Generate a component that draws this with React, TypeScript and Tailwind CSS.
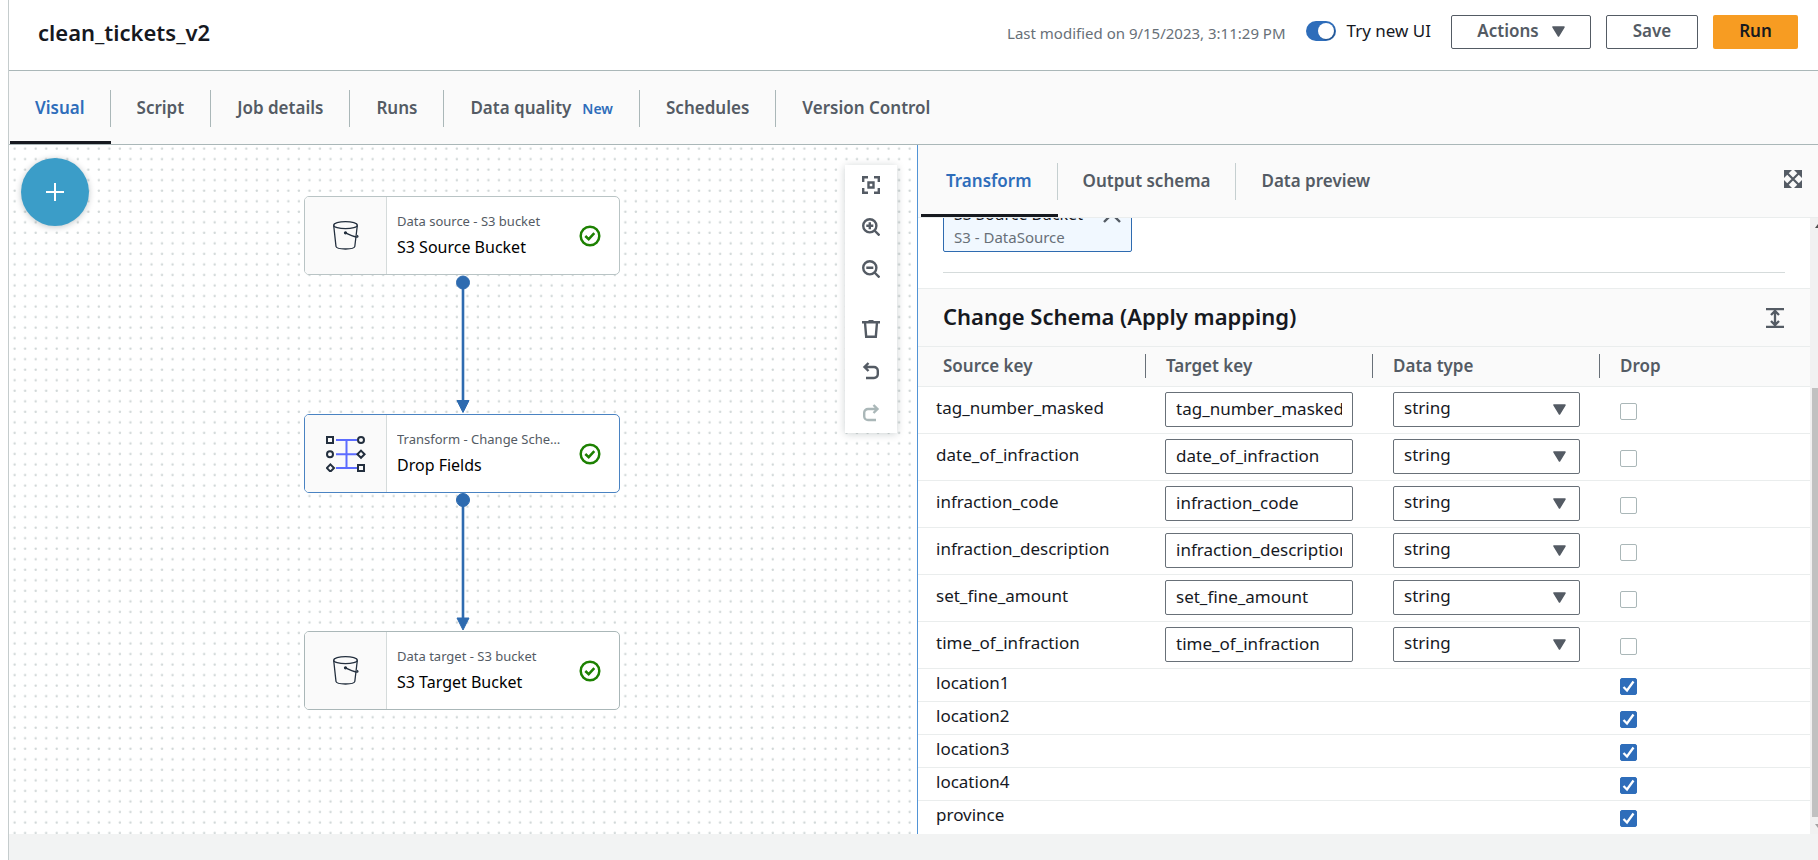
import React from "react";

const mappedFields = [
  "tag_number_masked",
  "date_of_infraction",
  "infraction_code",
  "infraction_description",
  "set_fine_amount",
  "time_of_infraction",
];
const droppedFields = ["location1", "location2", "location3", "location4", "province"];

const mainTabs = ["Visual", "Script", "Job details", "Runs", "Data quality", "Schedules", "Version Control"];
const panelTabs = ["Transform", "Output schema", "Data preview"];

function Caret() {
  return (
    <svg width="13" height="11" viewBox="0 0 13 11" aria-hidden="true">
      <path d="M1 1h11L6.500 10z" fill="#545b64" stroke="#545b64" strokeWidth="1.500" strokeLinejoin="round" />
    </svg>
  );
}

function BucketIcon() {
  return (
    <svg width="26" height="29" viewBox="0 0 26 29" fill="none" stroke="#232f3e" strokeWidth="1.300" aria-hidden="true">
      <ellipse cx="12.500" cy="4.200" rx="11.800" ry="3.500" />
      <path d="M.7 4.500 3 25.500c.3 1.700 4.500 2.500 9.500 2.500s9-.8 9.300-2.500L24.300 4.500" />
      <path d="M12.500 11.800c3.500 1.800 8 3.700 11.300 4.300 1.300.2 1.600-.8.300-1.900" />
      <circle cx="12.500" cy="11.800" r="1" fill="#232f3e" />
    </svg>
  );
}

function MappingIcon() {
  return (
    <svg width="40" height="36" viewBox="0 0 40 36" fill="none" strokeWidth="2" aria-hidden="true">
      <path d="M10 4h21M10 18.200h21M10 32h21M20.500 4v28" stroke="#5c6cff" />
      <g stroke="#232f3e">
        <rect x="1" y="1" width="6" height="6" />
        <circle cx="35" cy="4" r="3" />
        <circle cx="4" cy="18.200" r="3" />
        <path d="M35 14.600l3.600 3.600-3.600 3.600-3.600-3.600zM4.400 28.400 8 32l-3.600 3.600L.8 32z" />
        <rect x="32" y="29" width="6" height="6" />
      </g>
    </svg>
  );
}

function CheckCircle() {
  return (
    <svg className="shrink-0" width="22" height="22" viewBox="0 0 22 22" fill="none" stroke="#1d8102" strokeWidth="2.500" aria-hidden="true">
      <circle cx="11" cy="11" r="9.300" />
      <path d="M6.300 11l3.400 3.200 5.600-6" />
    </svg>
  );
}

type NodeProps = { kind: string; name: string; place: string; border: string; icon: React.ReactNode };

function FlowNode({ kind, name, place, border, icon }: NodeProps) {
  return (
    <div className={`absolute left-[295px] flex h-[79px] w-[316px] overflow-hidden rounded-[5px] border bg-white ${place} ${border}`}>
      <div className="flex w-[82px] shrink-0 items-center justify-center border-r border-[#d5dbdb] bg-[#fafafa]">{icon}</div>
      <div className="flex min-w-0 flex-1 items-center gap-[9px]">
        <div className="w-[183px] pb-px pl-[10px]">
          <p className="truncate text-[13px] leading-6 text-[#545b64]">{kind}</p>
          <p className="truncate text-[16px] leading-7 text-black">{name}</p>
        </div>
        <CheckCircle />
      </div>
    </div>
  );
}

function ToolButton({ label, children, muted }: { label: string; children: React.ReactNode; muted?: boolean }) {
  return (
    <button type="button" aria-label={label} className={`flex h-10 w-full items-center justify-center ${muted ? "text-[#aab7b8]" : "text-[#545b64]"}`}>
      <svg width="18" height="18" viewBox="0 0 18 18" fill="none" stroke="currentColor" strokeWidth="2.400" aria-hidden="true">
        {children}
      </svg>
    </button>
  );
}

function Flow() {
  return (
    <section aria-label="Job graph" className="relative min-w-0 flex-1 overflow-hidden bg-white">
      <svg className="absolute inset-0 h-full w-full" aria-hidden="true">
        <defs>
          <pattern id="dots" width="10.530" height="10.530" patternUnits="userSpaceOnUse">
            <circle cx="5.600" cy="3.700" r="1.200" fill="#d0d7d7" />
          </pattern>
        </defs>
        <rect width="100%" height="100%" fill="url(#dots)" />
        <g fill="#2e6bb0" stroke="#2e6bb0">
          <path d="M454 137v120M454 355v120" strokeWidth="2.600" />
          <circle cx="454" cy="137.500" r="6.500" />
          <circle cx="454" cy="355" r="6.500" />
          <path d="M448 255.500h12l-6 12zM448 473h12l-6 12z" />
        </g>
      </svg>
      <FlowNode kind="Data source - S3 bucket" name="S3 Source Bucket" place="top-[51px]" border="border-[#b9c4c5]" icon={<BucketIcon />} />
      <FlowNode kind="Transform - Change Schema (Apply mapping)" name="Drop Fields" place="top-[269px]" border="border-[#4a83c2]" icon={<MappingIcon />} />
      <FlowNode kind="Data target - S3 bucket" name="S3 Target Bucket" place="top-[486px]" border="border-[#aab7b8]" icon={<BucketIcon />} />
      <button type="button" aria-label="Add node" className="absolute left-3 top-[13px] flex h-[68px] w-[68px] items-center justify-center rounded-full bg-[#3b9dc8] shadow-[0_1px_6px_rgba(0,28,36,0.25)]">
        <svg width="18" height="18" viewBox="0 0 18 18" stroke="#fff" strokeWidth="2" aria-hidden="true">
          <path d="M9 0v18M0 9h18" />
        </svg>
      </button>
      <div className="absolute right-5 top-5 flex w-[52px] flex-col gap-0.5 bg-white shadow-[0_1px_8px_rgba(0,28,36,0.2)]">
        <ToolButton label="Fit to view">
          <path d="M1.200 6V1.200H6M12 1.200h4.800V6M16.800 12v4.800H12M6 16.800H1.200V12M6.500 6.500h5v5h-5z" />
        </ToolButton>
        <ToolButton label="Zoom in">
          <circle cx="7.800" cy="7.800" r="6.600" />
          <path d="M12.500 12.500l5 5M7.800 4.300v7M4.300 7.800h7" />
        </ToolButton>
        <ToolButton label="Zoom out">
          <circle cx="7.800" cy="7.800" r="6.600" />
          <path d="M12.500 12.500l5 5M4.300 7.800h7" />
        </ToolButton>
        <div className="h-4" />
        <ToolButton label="Delete">
          <path d="M0 2.200h18M6.500 1h5M3 2.500l1.200 14.300h9.600L15 2.500" />
        </ToolButton>
        <ToolButton label="Undo">
          <path d="M6.500 1 2.500 5l4 4M2.500 5H12a3.800 3.800 0 0 1 3.800 3.800v3.400A3.800 3.800 0 0 1 12 16H4" />
        </ToolButton>
        <ToolButton label="Redo" muted>
          <path d="M11.500 1l4 4-4 4M15.500 5H6a3.800 3.800 0 0 0-3.800 3.800v3.400A3.800 3.800 0 0 0 6 16h8" />
        </ToolButton>
      </div>
    </section>
  );
}

function DropBox({ name, checked }: { name: string; checked: boolean }) {
  return (
    <span className="mt-1 grid w-[17px] place-items-center">
      <input
        type="checkbox"
        aria-label={`Drop ${name}`}
        defaultChecked={checked}
        className="peer col-start-1 row-start-1 h-[17px] w-[17px] appearance-none rounded-[2px] border border-[#aab7b8] bg-white checked:border-[#2e6dba] checked:bg-[#2e6dba]"
      />
      <svg width="13" height="13" viewBox="0 0 13 13" fill="none" stroke="#fff" strokeWidth="2.300" aria-hidden="true" className="pointer-events-none invisible col-start-1 row-start-1 peer-checked:visible">
        <path d="M1.500 7 5 10.500 11.500 1.500" />
      </svg>
    </span>
  );
}

function SchemaTable() {
  return (
    <table className="w-full table-fixed border-collapse text-left text-[17px] leading-6 text-[#16191f]">
      <thead className="bg-[#fafafa] text-[#545b64]">
        <tr className="h-[39px] border-b border-[#eaeded]">
          <th className="w-[228px] p-0 font-semibold">
            <div className="border-r border-[#687078] pl-[25px]">Source key</div>
          </th>
          <th className="w-[227px] p-0 font-semibold">
            <div className="border-r border-[#687078] pl-5">Target key</div>
          </th>
          <th className="w-[227px] p-0 font-semibold">
            <div className="border-r border-[#687078] pl-5">Data type</div>
          </th>
          <th className="p-0 pl-5 font-semibold">Drop</th>
        </tr>
      </thead>
      <tbody>
        {mappedFields.map((f) => (
          <tr key={f} className="h-[47px] border-b border-[#eaeded]">
            <td className="p-0 pb-[3px] pl-[18px]">{f}</td>
            <td className="p-0 pl-[19px] pr-5">
              <input type="text" aria-label={`Target key for ${f}`} defaultValue={f} className="block h-[35px] w-full rounded-[2px] border border-[#687078] bg-white px-[10px] pb-0.5" />
            </td>
            <td className="p-0 px-5">
              <div className="relative">
                <select aria-label={`Data type for ${f}`} className="block h-[35px] w-full appearance-none rounded-[2px] border border-[#687078] bg-white px-[10px] pb-[3px]">
                  <option>string</option>
                </select>
                <span className="pointer-events-none absolute inset-y-0 right-[14px] flex items-center">
                  <Caret />
                </span>
              </div>
            </td>
            <td className="p-0 pl-5">
              <DropBox name={f} checked={false} />
            </td>
          </tr>
        ))}
        {droppedFields.map((f) => (
          <tr key={f} className="h-[33px] border-b border-[#eaeded] last:border-0">
            <td className="p-0 pb-[3px] pl-[18px]">{f}</td>
            <td className="p-0" />
            <td className="p-0" />
            <td className="p-0 pl-5">
              <DropBox name={f} checked />
            </td>
          </tr>
        ))}
      </tbody>
    </table>
  );
}

function Panel() {
  return (
    <section aria-label="Node properties" className="flex w-[901px] shrink-0 flex-col border-l border-[#5294d6] bg-white">
      <div className="flex h-[73px] items-stretch border-b border-[#eaeded] bg-[#fafafa] pl-[3px] pr-4">
        {panelTabs.map((t, i) => (
          <button
            key={t}
            type="button"
            className={`flex items-center border-b-[3px] pt-[3px] text-[17px] font-semibold ${i === 0 ? "border-[#16191f] text-[#2e6dba]" : "border-transparent text-[#545b64]"}`}
          >
            <span className={`flex h-[37px] items-center px-[25px] ${i < 2 ? "border-r border-[#c5cfd0]" : ""}`}>{t}</span>
          </button>
        ))}
        <button type="button" aria-label="Expand panel" className="mb-1 ml-auto text-[#545b64]">
          <svg width="18" height="18" viewBox="0 0 18 18" fill="currentColor" stroke="currentColor" aria-hidden="true">
            <path d="M3 3l12 12M15 3 3 15" strokeWidth="2.200" />
            <path stroke="none" d="M0 0h8L0 8zM18 0v8l-8-8zM18 18h-8l8-8zM0 18v-8l8 8z" />
          </svg>
        </button>
      </div>
      <div className="flex flex-1">
        <div className="min-w-0 flex-1">
          <div className="px-[25px]">
            <div className="flex h-[34px] flex-col justify-end overflow-hidden">
              <div className="w-[189px] shrink-0 rounded-[2px] border border-[#2e6bb0] bg-[#f1f8ff] px-[10px] pb-[3px]">
                <div className="flex items-center justify-between">
                  <span className="text-[16px] leading-6 text-[#16191f]">S3 Source Bucket</span>
                  <svg width="18" height="18" viewBox="0 0 18 18" stroke="#545b64" strokeWidth="2.400" aria-hidden="true">
                    <path d="M1 1l16 16M17 1 1 17" />
                  </svg>
                </div>
                <p className="text-[15px] leading-[22px] text-[#687078]">S3 - DataSource</p>
              </div>
            </div>
            <hr className="mb-[15px] mt-5 border-[#d5dbdb]" />
          </div>
          <div className="flex h-[59px] items-center justify-between border-y border-[#eaeded] bg-[#fafafa] pl-[25px] pr-[26px]">
            <h2 className="pb-0.5 text-[22px] font-semibold text-[#16191f]">Change Schema (Apply mapping)</h2>
            <button type="button" aria-label="Expand section">
              <svg width="18" height="20" viewBox="0 0 18 20" fill="none" stroke="#545b64" strokeWidth="2.300" aria-hidden="true">
                <path d="M0 1.200h18M0 18.800h18M9 3v14M5 7l4-4 4 4M5 13l4 4 4-4" />
              </svg>
            </button>
          </div>
          <SchemaTable />
        </div>
        <div className="flex w-2 flex-col items-end overflow-hidden bg-[#f1f1f1]" aria-hidden="true">
          <div className="mt-1.5 h-1.5 w-[3px]">
            <svg width="3" height="4" viewBox="0 0 3 4"><path d="M0 4 3 0v4z" fill="#505050" /></svg>
          </div>
          <div className="mt-[158px] w-1.5 flex-1 bg-[#c1c1c1]" />
          <div className="flex h-[17px] items-center">
            <svg width="3" height="4" viewBox="0 0 3 4"><path d="M0 0h3v4z" fill="#a3a3a3" /></svg>
          </div>
        </div>
      </div>
    </section>
  );
}

export default function App() {
  return (
    <div className="flex min-h-screen bg-white pl-2 font-['Noto_Sans',sans-serif] text-[#16191f]">
      <div className="flex min-w-0 flex-1 flex-col border-l border-[#c5cccd]">
        <header className="flex h-[71px] items-start justify-between border-b border-[#aab7b8] pl-[29px] pr-5">
          <h1 className="mt-[15px] text-[22px] font-semibold leading-[34px]">clean_tickets_v2</h1>
          <div className="mt-[15px] flex items-center">
            <p className="pt-[3px] text-[15px] text-[#687078]">Last modified on 9/15/2023, 3:11:29 PM</p>
            <label className="ml-5 flex items-center pb-[3px] text-[17px]">
              <input
                type="checkbox"
                role="switch"
                defaultChecked
                className="mr-[11px] flex h-5 w-[30px] appearance-none items-center justify-end rounded-full bg-[#2e6dba] pr-0.5 before:h-4 before:w-4 before:rounded-full before:bg-white before:shadow-[1px_1px_1px_rgba(0,0,0,0.25)]"
              />
              Try new UI
            </label>
            <button type="button" className="ml-5 flex h-[34px] w-[140px] items-center justify-center gap-[13px] rounded-[2px] border border-[#545b64] pb-0.5 text-[17px] font-semibold text-[#545b64]">
              Actions
              <Caret />
            </button>
            <button type="button" className="ml-[15px] h-[34px] w-[92px] rounded-[2px] border border-[#545b64] pb-0.5 text-[17px] font-semibold text-[#545b64]">Save</button>
            <button type="button" className="ml-[15px] h-[34px] w-[85px] rounded-[2px] bg-[#f79c22] pb-0.5 text-[17px] font-semibold text-[#16191f]">Run</button>
          </div>
        </header>
        <nav className="flex h-[74px] items-stretch border-b border-[#aab7b8] bg-[#fafafa] pl-px">
          {mainTabs.map((t, i) => (
            <button
              key={t}
              type="button"
              className={`flex items-center border-b-[3px] pt-1 text-[17px] font-semibold ${i === 0 ? "border-[#16191f] text-[#2e6dba]" : "border-transparent text-[#545b64]"}`}
            >
              <span className={`flex h-[37px] items-center ${i === 0 ? "px-[25px]" : "px-[26px]"} ${i < 6 ? "border-r border-[#aab7b8]" : ""}`}>
                {t}
                {t === "Data quality" && <span className="ml-[11px] text-[14px] text-[#2e6dba]">New</span>}
              </span>
            </button>
          ))}
        </nav>
        <main className="flex flex-1">
          <Flow />
          <Panel />
        </main>
        <footer className="h-[26px] bg-[#f2f3f3]" />
      </div>
    </div>
  );
}
